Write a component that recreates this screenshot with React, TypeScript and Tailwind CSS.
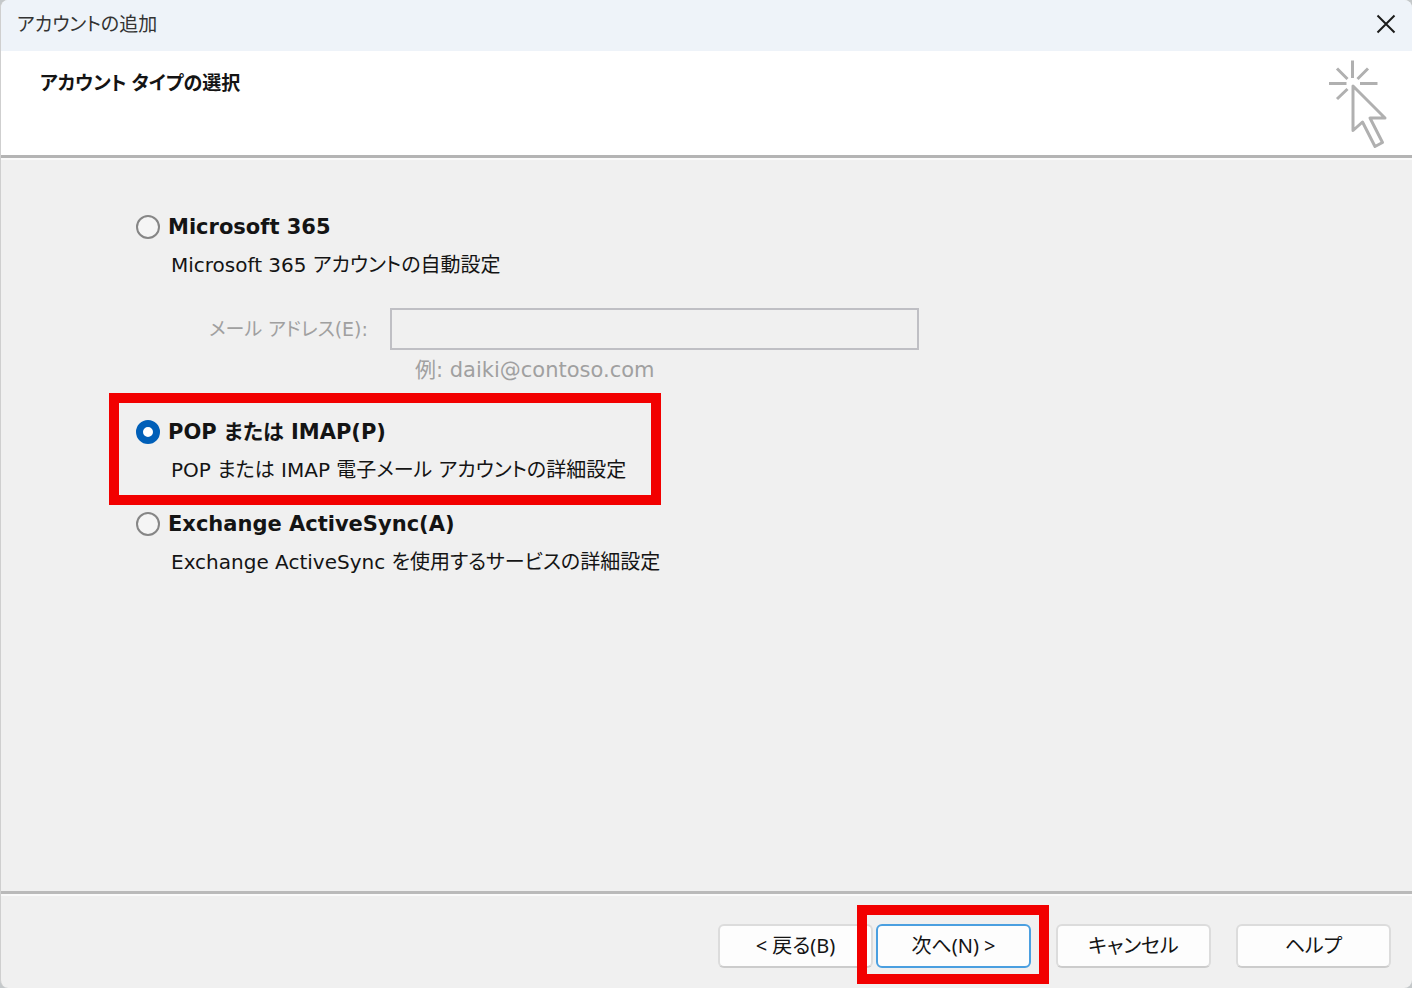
import React, { useState } from "react";
import clsx from "clsx";

type AccountType = "m365" | "pop" | "eas";

const CloseIcon = () => (
  <svg width="20" height="20" viewBox="0 0 20 20" fill="none" stroke="#1b1b1b" strokeWidth="2">
    <path d="M1.5 1.5 18.5 18.5M18.5 1.5 1.5 18.5" />
  </svg>
);

const ClickIcon = () => (
  <svg width="64" height="92" viewBox="0 0 64 92" fill="none" stroke="#b0b0b0" strokeWidth="3">
    <path d="M25.5 2.5V20M2 25.5H19.5M33 25.5H50.5M10 10.5 20.5 21M41 10.5 30.5 21M10 41 20.5 31" />
    <path d="M26 28V72.5L35.5 64 48 88.5 55.5 84.5 43 60H58Z" strokeLinejoin="round" />
  </svg>
);

// Red marker frame laid over the part the reader should look at
const Marker = ({ className }: { className: string }) => (
  <span className={clsx("pointer-events-none absolute border-10 border-[#f20000]", className)} />
);

const Option = ({
  id,
  title,
  description,
  checked,
  onSelect,
}: {
  id: AccountType;
  title: string;
  description: string;
  checked: boolean;
  onSelect: (id: AccountType) => void;
}) => {
  return (
    <div>
      <div className="flex h-[38px] items-center gap-2">
        <input
          type="radio"
          id={id}
          name="account-type"
          checked={checked}
          onChange={() => onSelect(id)}
          aria-describedby={`${id}-description`}
          className="size-6 shrink-0 appearance-none rounded-full border-2 border-[#868686] bg-[#f5f5f5] checked:border-7 checked:border-[#005fb8] checked:bg-white"
        />
        <label htmlFor={id} className="text-[21px] font-bold">
          {title}
        </label>
      </div>
      <p id={`${id}-description`} className="flex h-[38px] items-center pl-[35px]">
        {description}
      </p>
    </div>
  );
};

const DialogButton = ({
  children,
  primary = false,
}: {
  children: React.ReactNode;
  primary?: boolean;
}) => (
  <button
    type="button"
    className={clsx(
      "h-11 w-[155px] rounded-md bg-[#fdfdfd]",
      primary ? "border-2 border-[#4a9fe0]" : "border-2 border-[#dcdcdc] border-b-[#cccccc]"
    )}
  >
    {children}
  </button>
);

export default function App() {
  const [selected, setSelected] = useState<AccountType>("pop");
  const [email, setEmail] = useState("");

  return (
    <div className="min-h-screen bg-[#c4c8ca]">
      <form
        onSubmit={(e) => e.preventDefault()}
        className="flex min-h-screen flex-col overflow-hidden rounded-lg border-l border-[#cfcfcf] bg-[#f0f0f0] font-['Noto_Sans','Noto_Sans_CJK_JP',sans-serif] text-[20px] leading-7 text-[#141414] [font-feature-settings:'palt']"
      >
        <header className="flex h-[51px] items-center justify-between bg-[#eef3f9] pr-4 pb-1 pl-4">
          <h1 className="text-[19px] text-[#333333]">アカウントの追加</h1>
          <button type="button" aria-label="閉じる">
            <CloseIcon />
          </button>
        </header>

        <div className="flex h-[107px] items-start justify-between border-b-3 border-[#b4b4b4] bg-white pr-[21px] pl-[39px]">
          <h2 className="mt-[18px] text-[19px] font-bold">アカウント タイプの選択</h2>
          <div className="mt-[7px]">
            <ClickIcon />
          </div>
        </div>

        <main className="flex-1 border-t-2 border-[#fafafa] pt-12 pr-8 pl-[135px] font-['DejaVu_Sans','Noto_Sans_CJK_JP',sans-serif]">
          <Option
            id="m365"
            title="Microsoft 365"
            description="Microsoft 365 アカウントの自動設定"
            checked={selected === "m365"}
            onSelect={setSelected}
          />
          <div className="mt-6 flex items-center pl-[73px] text-[#a0a0a0]">
            <label htmlFor="email" className="w-[181px] text-[19px]">
              メール アドレス(E):
            </label>
            <input
              id="email"
              type="email"
              value={email}
              onChange={(e) => setEmail(e.target.value)}
              disabled={selected !== "m365"}
              aria-describedby="email-example"
              className="h-[42px] max-w-[529px] flex-1 border-2 border-[#bfbfc4] bg-[#f0f0f0] px-2"
            />
          </div>
          <p
            id="email-example"
            className="flex h-10 items-center pl-[279px] text-[21px] text-[#a0a0a0]"
          >
            例: daiki@contoso.com
          </p>

          <div className="relative mt-[23px]">
            <Option
              id="pop"
              title="POP または IMAP(P)"
              description="POP または IMAP 電子メール アカウントの詳細設定"
              checked={selected === "pop"}
              onSelect={setSelected}
            />
            <Marker className="-top-5 -bottom-4 -left-[27px] w-[552px]" />
          </div>

          <div className="mt-4">
            <Option
              id="eas"
              title="Exchange ActiveSync(A)"
              description="Exchange ActiveSync を使用するサービスの詳細設定"
              checked={selected === "eas"}
              onSelect={setSelected}
            />
          </div>
        </main>

        <footer className="border-t-3 border-[#bababa]">
          <div className="flex justify-end border-t-2 border-[#fafafa] pt-7 pr-[21px] pb-5">
            <DialogButton>&lt; 戻る(B)</DialogButton>
            <div className="relative mr-[25px] ml-[3px]">
              <DialogButton primary>次へ(N) &gt;</DialogButton>
              <Marker className="-top-[19px] -right-[18px] -bottom-4 -left-[19px]" />
            </div>
            <DialogButton>キャンセル</DialogButton>
            <div className="ml-[25px]">
              <DialogButton>ヘルプ</DialogButton>
            </div>
          </div>
        </footer>
      </form>
    </div>
  );
}
